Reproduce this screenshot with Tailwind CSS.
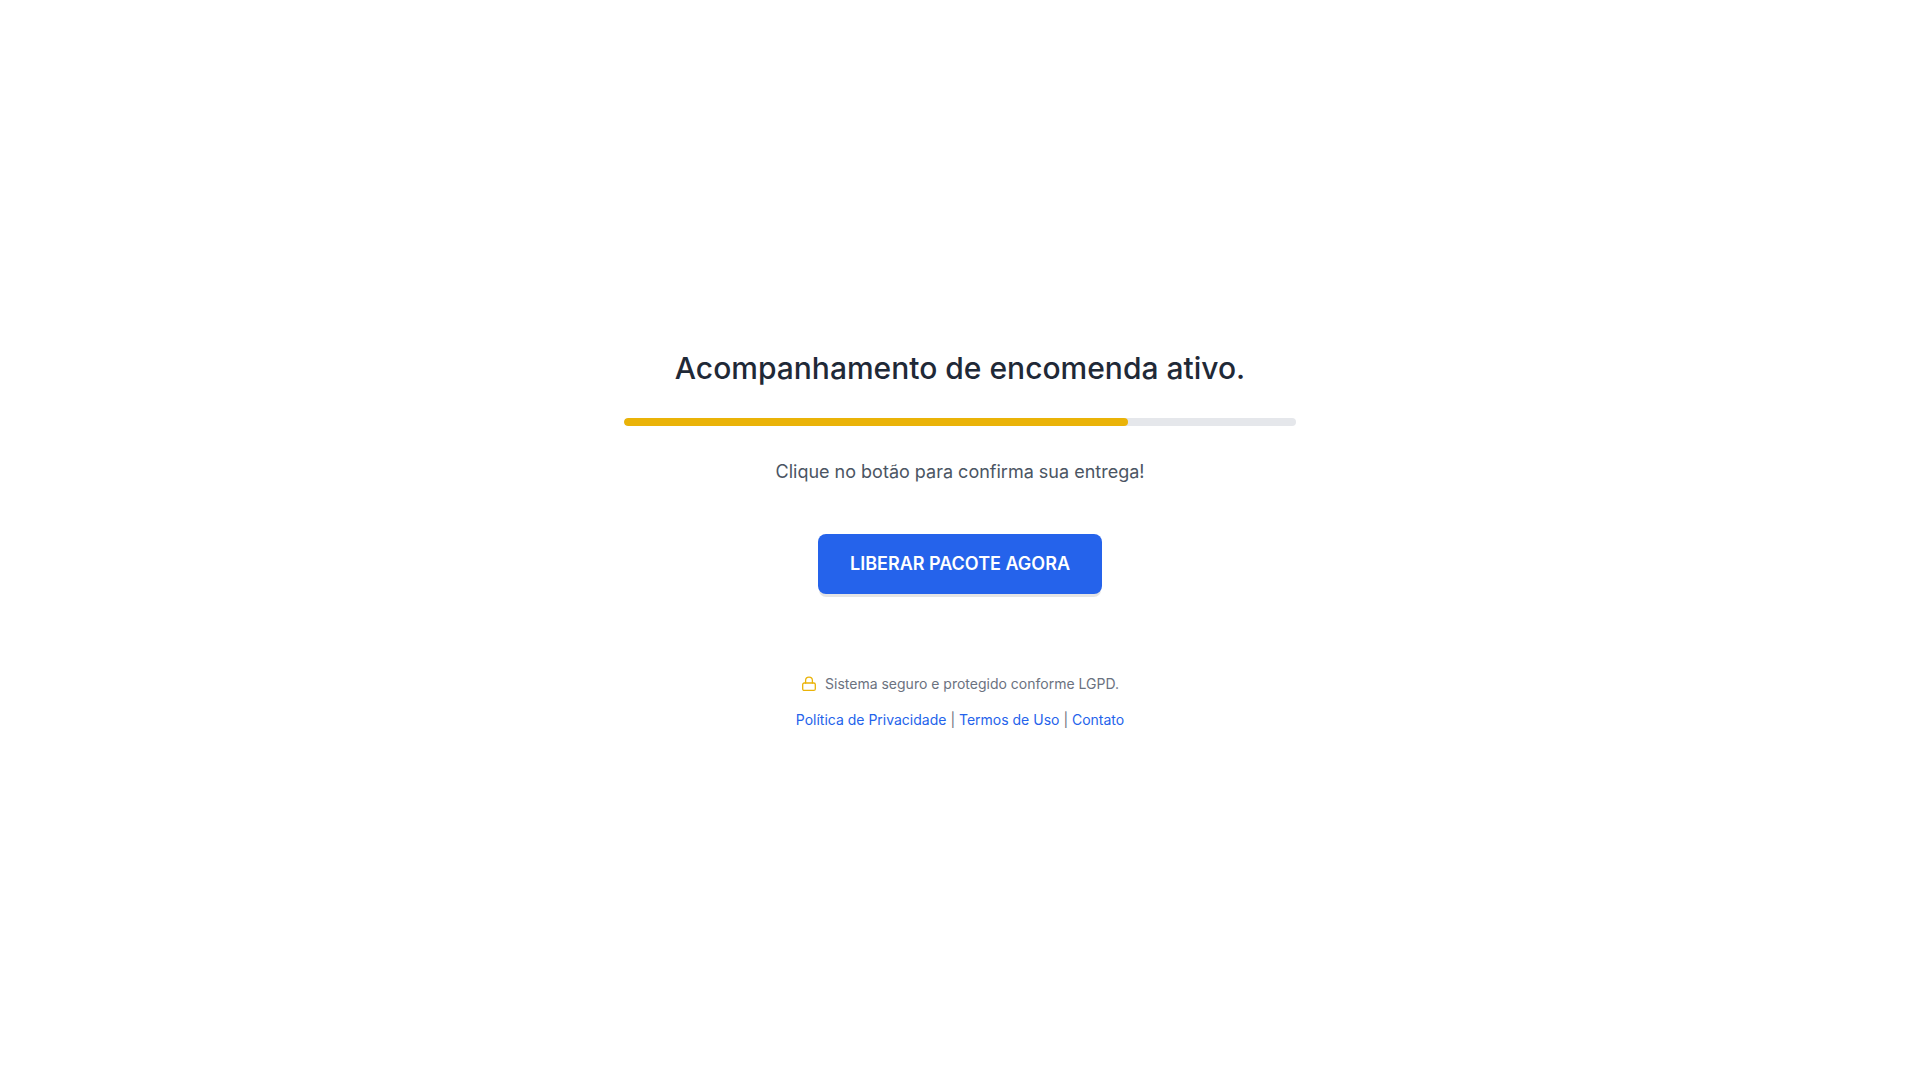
<!DOCTYPE html>
<html lang="pt-BR">
<head>
<meta charset="utf-8">
<meta name="viewport" content="width=device-width, initial-scale=1">
<title>Acompanhamento de encomenda</title>
<script src="https://cdn.jsdelivr.net/npm/@tailwindcss/browser@4"></script>
</head>
<body class="min-h-screen bg-white font-['Inter',sans-serif] flex items-center justify-center">
<main class="w-full max-w-2xl text-center">
<h1 class="text-3xl font-medium text-[#1f2937] mb-8">Acompanhamento de encomenda ativo.</h1>
<div class="h-2 w-full rounded-full bg-[#e5e7eb] overflow-hidden mb-8" role="progressbar" aria-label="Progresso" aria-valuenow="75" aria-valuemin="0" aria-valuemax="100">
<div class="h-full rounded-full bg-[#eab308]" style="width:75%"></div>
</div>
<p class="text-lg text-[#4b5563] mb-12">Clique no botão para confirma sua entrega!</p>
<button type="button" class="rounded-lg bg-[#2563eb] px-8 py-4 text-lg font-semibold text-white shadow-[0_4px_0_-1px_rgba(0,0,0,0.1)]">LIBERAR PACOTE AGORA</button>
<footer class="mt-20 text-sm text-[#6b7280]">
<p class="mb-4 flex items-center justify-center gap-2">
<svg class="size-4 text-[#eab308]" viewBox="0 0 16 16" fill="none" stroke="currentColor" stroke-width="1.3" stroke-linecap="round" stroke-linejoin="round" aria-hidden="true"><rect x="1.7" y="7" width="12.6" height="7.4" rx="1.5"/><path d="M4.6 7V4.6a3.4 3.4 0 0 1 6.8 0V7"/></svg>
<span>Sistema seguro e protegido conforme LGPD.</span>
</p>
<nav><a href="#" class="text-[#2563eb]">Política de Privacidade</a> | <a href="#" class="text-[#2563eb]">Termos de Uso</a> | <a href="#" class="text-[#2563eb]">Contato</a></nav>
</footer>
</main>
</body>
</html>
